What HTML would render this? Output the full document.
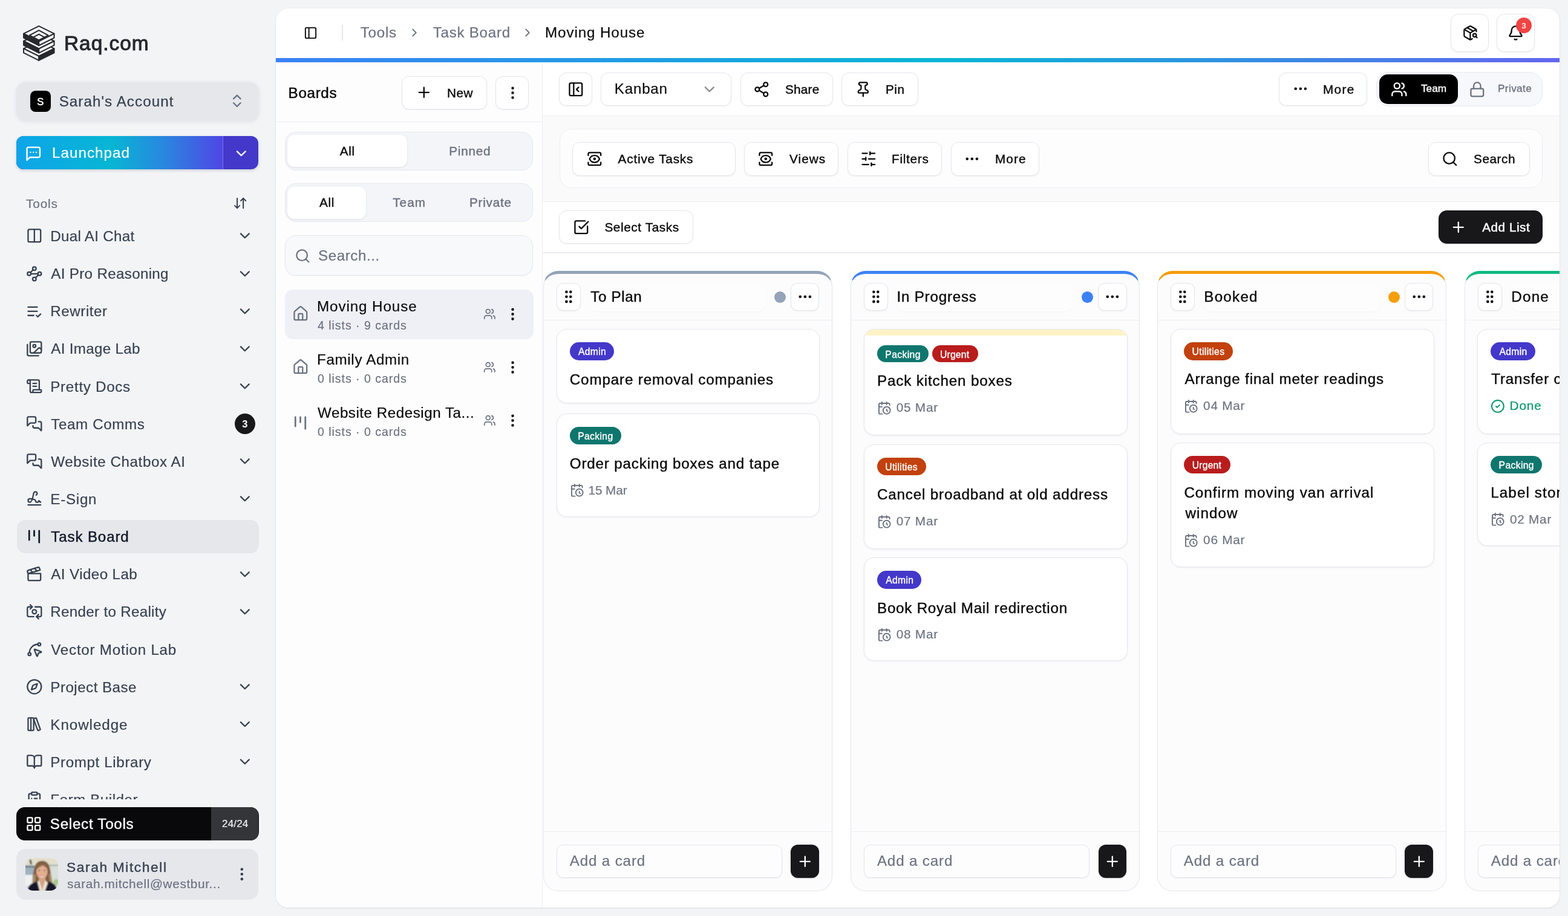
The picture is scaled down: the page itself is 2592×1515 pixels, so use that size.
<!DOCTYPE html><html lang="en"><head><meta charset="utf-8"><title>Task Board - Moving House | Raq.com</title><style>
*{box-sizing:border-box;margin:0;padding:0}
html,body{width:2592px;height:1515px;overflow:hidden;background:#f3f4f6;font-family:"Liberation Sans",sans-serif}
#app{position:absolute;left:0;top:0;width:2592px;height:1515px;will-change:transform}
.b,.t,.i{position:absolute}
.t{white-space:nowrap;line-height:1;font-kerning:normal}
.i{fill:none;stroke:currentColor;stroke-linecap:round;stroke-linejoin:round;overflow:visible}
</style></head><body><div id="app"><aside>
<svg class="i" style="left:37.6px;top:41.9px;width:52.6px;height:59.1px;stroke:none" viewBox="-1.1 -1.1 55 61.8"><g stroke="#262a2e" stroke-width="2.1" stroke-linejoin="round"><polygon points="26.40,25.80 52.80,39.00 26.40,52.20 0.00,39.00" fill="#f3f4f6"/><polygon points="0.00,39.00 26.40,52.20 26.40,59.45 0.00,46.25" fill="#f3f4f6"/><polygon points="26.40,52.20 52.80,39.00 52.80,46.25 26.40,59.45" fill="#262a2e"/><polygon points="26.40,12.90 52.80,26.10 26.40,39.30 0.00,26.10" fill="#f3f4f6"/><polygon points="0.00,26.10 26.40,39.30 26.40,46.55 0.00,33.35" fill="#262a2e"/><polygon points="26.40,39.30 52.80,26.10 52.80,33.35 26.40,46.55" fill="#f3f4f6"/><polygon points="26.40,0.00 52.80,13.20 26.40,26.40 0.00,13.20" fill="#f3f4f6"/><polygon points="0.00,13.20 26.40,26.40 26.40,33.65 0.00,20.45" fill="#262a2e"/><polygon points="26.40,26.40 52.80,13.20 52.80,20.45 26.40,33.65" fill="#f3f4f6"/><polygon points="26.4,7.5 42.5,16.0 26.4,24.5 10.299999999999997,16.0" fill="none"/><polygon points="26.4,14.299999999999999 35.9,19.4 26.4,24.5 16.9,19.4" fill="#f3f4f6"/></g></svg>
<span class="t" style="left:106px;top:54.67px;font-size:33.4px;color:#25282d;letter-spacing:0.984px;-webkit-text-stroke:1.0px #25282d;">Raq.com</span>
<div class="b" style="left:27px;top:136px;width:401px;height:64px;background:#e5e7eb;border-radius:16px;box-shadow:0 1px 5px 1px rgba(226,228,233,.95);"></div>
<div class="b" style="left:49.5px;top:150px;width:34.5px;height:34.5px;background:#000;border-radius:8.6px;"></div>
<span class="t" style="left:61.2px;top:159.68px;font-size:16.5px;color:#fff;-webkit-text-stroke:0.5px #fff;">S</span>
<span class="t" style="left:97.7px;top:156.17px;font-size:24.19px;color:#374151;letter-spacing:1.046px;-webkit-text-stroke:0.25px #374151;">Sarah's Account</span>
<svg class="i" style="left:377.68px;top:153.18px;width:27.65px;height:27.65px;color:#6b7280;" viewBox="0 0 24 24" stroke-width="2"><path d="m7 15 5 5 5-5"/><path d="m7 9 5-5 5 5"/></svg>
<div class="b" style="left:27px;top:225px;width:400px;height:55px;background:#4338ca;border-radius:12px;box-shadow:0 2px 5px rgba(30,41,59,.18);overflow:hidden;">
<div class="b" style="left:0px;top:0px;width:340.5px;height:55px;background:linear-gradient(90deg,#0ea5e9 0%,#06b6d4 46%,#2a86e0 72%,#4f46e5 100%);"></div>
<div class="b" style="left:340.5px;top:0px;width:1.5px;height:55px;background:#7c74ea;"></div>
</div>
<svg class="i" style="left:41.25px;top:239.75px;width:28.5px;height:28.5px;color:#fff;" viewBox="0 0 24 24" stroke-width="2"><path d="M21 15a2 2 0 0 1-2 2H7l-4 4V5a2 2 0 0 1 2-2h14a2 2 0 0 1 2 2z"/><path d="M8 10h.01"/><path d="M12 10h.01"/><path d="M16 10h.01"/></svg>
<span class="t" style="left:86px;top:240.67px;font-size:24.19px;color:#fff;letter-spacing:1.030px;-webkit-text-stroke:0.15px #fff;">Launchpad</span>
<svg class="i" style="left:385.18px;top:239.68px;width:27.65px;height:27.65px;color:#fff;" viewBox="0 0 24 24" stroke-width="2"><path d="m6 9 6 6 6-6"/></svg>
<span class="t" style="left:43px;top:327.09px;font-size:20.74px;color:#6b7280;letter-spacing:0.866px;-webkit-text-stroke:0.2px #6b7280;">Tools</span>
<svg class="i" style="left:384.9px;top:324.4px;width:24.2px;height:24.2px;color:#374151;" viewBox="0 0 24 24" stroke-width="2"><path d="m3 16 4 4 4-4"/><path d="M7 20V4"/><path d="m21 8-4-4-4 4"/><path d="M17 4v16"/></svg>
<nav class="b" style="left:0px;top:350px;width:456px;height:972.3px;overflow:hidden;">
<svg class="i" style="left:42.88px;top:26.48px;width:27.65px;height:27.65px;color:#374151;" viewBox="0 0 24 24" stroke-width="2"><rect width="18" height="18" x="3" y="3" rx="2"/><path d="M12 3v18"/></svg>
<span class="t" style="left:83.3px;top:29.07px;font-size:24.19px;color:#374151;letter-spacing:0.281px;-webkit-text-stroke:0.18px #374151;">Dual AI Chat</span>
<svg class="i" style="left:390.68px;top:26.48px;width:27.65px;height:27.65px;color:#374151;" viewBox="0 0 24 24" stroke-width="2"><path d="m6 9 6 6 6-6"/></svg>
<svg class="i" style="left:42.88px;top:88.61px;width:27.65px;height:27.65px;color:#374151;" viewBox="0 0 24 24" stroke-width="2"><circle cx="12" cy="4.5" r="2.5"/><path d="m10.2 6.3-3.9 3.9"/><circle cx="4.5" cy="12" r="2.5"/><path d="M7 12h10"/><circle cx="19.5" cy="12" r="2.5"/><path d="m13.8 17.7 3.9-3.9"/><circle cx="12" cy="19.5" r="2.5"/></svg>
<span class="t" style="left:84.3px;top:91.21px;font-size:24.19px;color:#374151;letter-spacing:0.312px;-webkit-text-stroke:0.18px #374151;">AI Pro Reasoning</span>
<svg class="i" style="left:390.68px;top:88.61px;width:27.65px;height:27.65px;color:#374151;" viewBox="0 0 24 24" stroke-width="2"><path d="m6 9 6 6 6-6"/></svg>
<svg class="i" style="left:42.88px;top:150.74px;width:27.65px;height:27.65px;color:#374151;" viewBox="0 0 24 24" stroke-width="2"><path d="M11 18H3"/><path d="m15 18 2 2 4-4"/><path d="M16 12H3"/><path d="M16 6H3"/></svg>
<span class="t" style="left:83.3px;top:153.35px;font-size:24.19px;color:#374151;letter-spacing:0.545px;-webkit-text-stroke:0.18px #374151;">Rewriter</span>
<svg class="i" style="left:390.68px;top:150.74px;width:27.65px;height:27.65px;color:#374151;" viewBox="0 0 24 24" stroke-width="2"><path d="m6 9 6 6 6-6"/></svg>
<svg class="i" style="left:42.88px;top:212.87px;width:27.65px;height:27.65px;color:#374151;" viewBox="0 0 24 24" stroke-width="2"><path d="M18 22H4a2 2 0 0 1-2-2V6"/><path d="m22 13-1.296-1.296a2.41 2.41 0 0 0-3.408 0L11 18"/><circle cx="12" cy="8" r="2"/><rect width="16" height="16" x="6" y="2" rx="2"/></svg>
<span class="t" style="left:84.3px;top:215.49px;font-size:24.19px;color:#374151;letter-spacing:0.307px;-webkit-text-stroke:0.18px #374151;">AI Image Lab</span>
<svg class="i" style="left:390.68px;top:212.87px;width:27.65px;height:27.65px;color:#374151;" viewBox="0 0 24 24" stroke-width="2"><path d="m6 9 6 6 6-6"/></svg>
<svg class="i" style="left:42.88px;top:275px;width:27.65px;height:27.65px;color:#374151;" viewBox="0 0 24 24" stroke-width="2"><path d="M15 12h-5"/><path d="M15 8h-5"/><path d="M19 17V5a2 2 0 0 0-2-2H4"/><path d="M8 21h12a2 2 0 0 0 2-2v-1a1 1 0 0 0-1-1H11a1 1 0 0 0-1 1v1a2 2 0 1 1-4 0V5a2 2 0 1 0-4 0v2a1 1 0 0 0 1 1h3"/></svg>
<span class="t" style="left:83.3px;top:277.63px;font-size:24.19px;color:#374151;letter-spacing:0.689px;-webkit-text-stroke:0.18px #374151;">Pretty Docs</span>
<svg class="i" style="left:390.68px;top:275px;width:27.65px;height:27.65px;color:#374151;" viewBox="0 0 24 24" stroke-width="2"><path d="m6 9 6 6 6-6"/></svg>
<svg class="i" style="left:42.88px;top:337.13px;width:27.65px;height:27.65px;color:#374151;" viewBox="0 0 24 24" stroke-width="2"><path d="M14 9a2 2 0 0 1-2 2H6l-4 4V4a2 2 0 0 1 2-2h8a2 2 0 0 1 2 2z"/><path d="M18 9h2a2 2 0 0 1 2 2v11l-4-4h-6a2 2 0 0 1-2-2v-1"/></svg>
<span class="t" style="left:84.3px;top:339.77px;font-size:24.19px;color:#374151;letter-spacing:0.602px;-webkit-text-stroke:0.18px #374151;">Team Comms</span>
<div class="b" style="left:387.7px;top:334.2px;width:34px;height:34px;background:#18181b;border-radius:50%;"></div>
<span class="t" style="left:400.2px;top:343.48px;font-size:16.5px;color:#fff;font-weight:700;">3</span>
<svg class="i" style="left:42.88px;top:399.26px;width:27.65px;height:27.65px;color:#374151;" viewBox="0 0 24 24" stroke-width="2"><path d="M14 9a2 2 0 0 1-2 2H6l-4 4V4a2 2 0 0 1 2-2h8a2 2 0 0 1 2 2z"/><path d="M18 9h2a2 2 0 0 1 2 2v11l-4-4h-6a2 2 0 0 1-2-2v-1"/></svg>
<span class="t" style="left:84.3px;top:401.91px;font-size:24.19px;color:#374151;letter-spacing:0.571px;-webkit-text-stroke:0.18px #374151;">Website Chatbox AI</span>
<svg class="i" style="left:390.68px;top:399.26px;width:27.65px;height:27.65px;color:#374151;" viewBox="0 0 24 24" stroke-width="2"><path d="m6 9 6 6 6-6"/></svg>
<svg class="i" style="left:42.88px;top:461.39px;width:27.65px;height:27.65px;color:#374151;" viewBox="0 0 24 24" stroke-width="2"><path d="m21 17-2.156-1.868A.5.5 0 0 0 18 15.5v.5a1 1 0 0 1-1 1h-2a1 1 0 0 1-1-1c0-2.545-3.991-3.97-8.5-4a1 1 0 0 0 0 5c4.153 0 4.745-11.295 5.708-13.5a2.5 2.5 0 1 1 3.31 3.284"/><path d="M3 21h18"/></svg>
<span class="t" style="left:83.3px;top:464.05px;font-size:24.19px;color:#374151;letter-spacing:0.731px;-webkit-text-stroke:0.18px #374151;">E-Sign</span>
<svg class="i" style="left:390.68px;top:461.39px;width:27.65px;height:27.65px;color:#374151;" viewBox="0 0 24 24" stroke-width="2"><path d="m6 9 6 6 6-6"/></svg>
<div class="b" style="left:28px;top:510px;width:400px;height:54.5px;background:#e5e7eb;border-radius:14px;"></div>
<svg class="i" style="left:39.8px;top:521.2px;width:33px;height:33px;color:#111827;" viewBox="0 0 24 24" stroke-width="2"><path d="M6 5v11"/><path d="M12 5v6"/><path d="M18 5v14"/></svg>
<span class="t" style="left:84.3px;top:526.19px;font-size:24.19px;color:#111827;letter-spacing:0.828px;-webkit-text-stroke:0.45px #111827;">Task Board</span>
<svg class="i" style="left:42.88px;top:585.65px;width:27.65px;height:27.65px;color:#374151;" viewBox="0 0 24 24" stroke-width="2"><path d="M20.2 6 3 11l-.9-2.4c-.3-1.1.3-2.2 1.3-2.5l13.5-4c1.1-.3 2.2.3 2.5 1.3Z"/><path d="m6.2 5.3 3.1 3.9"/><path d="m12.4 3.4 3.1 4"/><path d="M3 11h18v8a2 2 0 0 1-2 2H5a2 2 0 0 1-2-2Z"/></svg>
<span class="t" style="left:84.3px;top:588.33px;font-size:24.19px;color:#374151;letter-spacing:0.398px;-webkit-text-stroke:0.18px #374151;">AI Video Lab</span>
<svg class="i" style="left:390.68px;top:585.65px;width:27.65px;height:27.65px;color:#374151;" viewBox="0 0 24 24" stroke-width="2"><path d="m6 9 6 6 6-6"/></svg>
<svg class="i" style="left:42.88px;top:647.78px;width:27.65px;height:27.65px;color:#374151;" viewBox="0 0 24 24" stroke-width="2"><path d="M11 19H4a2 2 0 0 1-2-2V7a2 2 0 0 1 2-2h5"/><path d="M13 5h7a2 2 0 0 1 2 2v10a2 2 0 0 1-2 2h-5"/><circle cx="12" cy="12" r="3"/><path d="m18 22-3-3 3-3"/><path d="m6 2 3 3-3 3"/></svg>
<span class="t" style="left:83.3px;top:650.47px;font-size:24.19px;color:#374151;letter-spacing:0.295px;-webkit-text-stroke:0.18px #374151;">Render to Reality</span>
<svg class="i" style="left:390.68px;top:647.78px;width:27.65px;height:27.65px;color:#374151;" viewBox="0 0 24 24" stroke-width="2"><path d="m6 9 6 6 6-6"/></svg>
<svg class="i" style="left:42.88px;top:709.91px;width:27.65px;height:27.65px;color:#374151;" viewBox="0 0 24 24" stroke-width="2"><path d="M12.034 12.681a.498.498 0 0 1 .647-.647l9 3.5a.5.5 0 0 1-.033.943l-3.444 1.068a1 1 0 0 0-.66.66l-1.067 3.443a.5.5 0 0 1-.943.033z"/><path d="M5 17A12 12 0 0 1 17 5"/><circle cx="19" cy="5" r="2"/><circle cx="5" cy="19" r="2"/></svg>
<span class="t" style="left:84.3px;top:712.61px;font-size:24.19px;color:#374151;letter-spacing:0.749px;-webkit-text-stroke:0.18px #374151;">Vector Motion Lab</span>
<svg class="i" style="left:42.88px;top:772.04px;width:27.65px;height:27.65px;color:#374151;" viewBox="0 0 24 24" stroke-width="2"><path d="m16.24 7.76-1.804 5.411a2 2 0 0 1-1.265 1.265L7.76 16.24l1.804-5.411a2 2 0 0 1 1.265-1.265z"/><circle cx="12" cy="12" r="10"/></svg>
<span class="t" style="left:83.3px;top:774.75px;font-size:24.19px;color:#374151;letter-spacing:0.466px;-webkit-text-stroke:0.18px #374151;">Project Base</span>
<svg class="i" style="left:390.68px;top:772.04px;width:27.65px;height:27.65px;color:#374151;" viewBox="0 0 24 24" stroke-width="2"><path d="m6 9 6 6 6-6"/></svg>
<svg class="i" style="left:42.88px;top:834.17px;width:27.65px;height:27.65px;color:#374151;" viewBox="0 0 24 24" stroke-width="2"><rect width="8" height="18" x="3" y="3" rx="1"/><path d="M7 3v18"/><path d="M20.4 18.9c.2.5-.1 1.1-.6 1.3l-1.9.7c-.5.2-1.1-.1-1.3-.6L11.1 5.1c-.2-.5.1-1.1.6-1.3l1.9-.7c.5-.2 1.1.1 1.3.6Z"/></svg>
<span class="t" style="left:83.3px;top:836.89px;font-size:24.19px;color:#374151;letter-spacing:0.946px;-webkit-text-stroke:0.18px #374151;">Knowledge</span>
<svg class="i" style="left:390.68px;top:834.17px;width:27.65px;height:27.65px;color:#374151;" viewBox="0 0 24 24" stroke-width="2"><path d="m6 9 6 6 6-6"/></svg>
<svg class="i" style="left:42.88px;top:896.3px;width:27.65px;height:27.65px;color:#374151;" viewBox="0 0 24 24" stroke-width="2"><path d="M12 7v14"/><path d="M3 18a1 1 0 0 1-1-1V4a1 1 0 0 1 1-1h5a4 4 0 0 1 4 4 4 4 0 0 1 4-4h5a1 1 0 0 1 1 1v13a1 1 0 0 1-1 1h-6a3 3 0 0 0-3 3 3 3 0 0 0-3-3z"/></svg>
<span class="t" style="left:83.3px;top:899.03px;font-size:24.19px;color:#374151;letter-spacing:0.614px;-webkit-text-stroke:0.18px #374151;">Prompt Library</span>
<svg class="i" style="left:390.68px;top:896.3px;width:27.65px;height:27.65px;color:#374151;" viewBox="0 0 24 24" stroke-width="2"><path d="m6 9 6 6 6-6"/></svg>
<svg class="i" style="left:42.88px;top:958.43px;width:27.65px;height:27.65px;color:#374151;" viewBox="0 0 24 24" stroke-width="2"><rect width="8" height="4" x="8" y="2" rx="1" ry="1"/><path d="M16 4h2a2 2 0 0 1 2 2v14a2 2 0 0 1-2 2H6a2 2 0 0 1-2-2V6a2 2 0 0 1 2-2h2"/><path d="M12 11h4"/><path d="M12 16h4"/><path d="M8 11h.01"/><path d="M8 16h.01"/></svg>
<span class="t" style="left:83.3px;top:961.17px;font-size:24.19px;color:#374151;letter-spacing:0.538px;-webkit-text-stroke:0.18px #374151;">Form Builder</span>
</nav>
<div class="b" style="left:27px;top:1335px;width:400.5px;height:55.3px;background:#09090b;border-radius:14px;overflow:hidden;">
<div class="b" style="left:321.7px;top:0px;width:78.8px;height:55.3px;background:#343539;"></div>
</div>
<svg class="i" style="left:42.18px;top:1348.78px;width:27.65px;height:27.65px;color:#fff;" viewBox="0 0 24 24" stroke-width="2"><rect width="7" height="7" x="3" y="3" rx="1"/><rect width="7" height="7" x="14" y="3" rx="1"/><rect width="7" height="7" x="14" y="14" rx="1"/><rect width="7" height="7" x="3" y="14" rx="1"/></svg>
<span class="t" style="left:82.8px;top:1351.27px;font-size:24.19px;color:#fff;letter-spacing:0.717px;-webkit-text-stroke:0.4px #fff;">Select Tools</span>
<span class="t" style="left:367px;top:1354.26px;font-size:17px;color:#f4f4f5;letter-spacing:0.178px;-webkit-text-stroke:0.18px #f4f4f5;">24/24</span>
<div class="b" style="left:27px;top:1404px;width:400.4px;height:83.8px;background:#e5e7eb;border-radius:15px;"></div>
<svg class="i" style="left:42px;top:1419px;width:54px;height:54px;stroke:none" viewBox="0 0 54 54"><defs><clipPath id="av"><rect width="54" height="54" rx="12.5"/></clipPath><filter id="bl" x="-10%" y="-10%" width="120%" height="120%"><feGaussianBlur stdDeviation="0.9"/></filter></defs><g clip-path="url(#av)"><g filter="url(#bl)"><rect x="-3" y="-3" width="60" height="60" fill="#dcdfd6"/><rect x="-3" y="-3" width="60" height="15" fill="#e3dfcb"/><rect x="-3" y="12" width="18" height="17" fill="#9fb3bf"/><rect x="-3" y="13" width="18" height="3" fill="#6f7f86"/><rect x="-3" y="28" width="17" height="18" fill="#eef0f2"/><rect x="38" y="12" width="19" height="30" fill="#d9e0da"/><rect x="38" y="11" width="19" height="2.5" fill="#aeb8b2"/><ellipse cx="51" cy="40" rx="5" ry="5" fill="#a9c98c"/><path d="M6.5 2.5l3 .5 1.5 7-3 1z" fill="#4a4a42"/><path d="M12 43c-1-9 1-20 3-27C17 8 22 4.5 28 4.8c7 .3 11 5 12.500 12 1.500 8 2.500 17 4 25z" fill="#7d5c40"/><path d="M12 43c0-6 1-12 2.500-17l3 2-1 15zM44.500 42c-1-6-1.500-12-3-17l-3 2 1.500 15z" fill="#a98a62"/><ellipse cx="27.400" cy="22.800" rx="9.300" ry="12" fill="#e3b091"/><path d="M18.200 19c1-8 6-10.500 10-10.500s8 3 9 10.500c-3-3-5.500-5.500-9-6.500-3 1.500-7 3.500-10 6.500z" fill="#8a6646"/><ellipse cx="23" cy="20.600" rx="1.700" ry=".9" fill="#5b4334"/><ellipse cx="31.600" cy="20.600" rx="1.700" ry=".9" fill="#5b4334"/><ellipse cx="22" cy="26" rx="2.600" ry="2" fill="#e9a58d" opacity=".7"/><ellipse cx="33" cy="26" rx="2.600" ry="2" fill="#e9a58d" opacity=".7"/><path d="M22.800 28.600c2.500 1.200 6.500 1.200 9.200 0-.8 3.600-8.200 3.800-9.200 0z" fill="#f6eeee"/><path d="M22.600 28.400c3 .9 6.500.9 9.600 0l-.5 1c-3 .9-5.800.9-8.600 0z" fill="#c77a72"/><path d="M22.500 33h10.500l1 11h-12.500z" fill="#d9a384"/><path d="M18.500 41l4.500-4 4.500 17h-10zM37 41l-4.500-4-4.500 17h10z" fill="#efe6d6"/><path d="M23.500 38.500h8.500l-4 15.500z" fill="#d49f80"/><path d="M3 57c0-10 5-15 16.500-18.500l4 15.500 2 3zM53.500 57c-1-10-5-15-15.500-18.500l-5.500 15.500-2 3z" fill="#121829"/></g></g></svg>
<span class="t" style="left:110px;top:1423.04px;font-size:22.81px;color:#374151;letter-spacing:1.587px;-webkit-text-stroke:0.4px #374151;">Sarah Mitchell</span>
<span class="t" style="left:111px;top:1452.09px;font-size:20.74px;color:#6b7280;letter-spacing:0.644px;-webkit-text-stroke:0.18px #6b7280;">sarah.mitchell@westbur...</span>
<svg class="i" style="left:386.48px;top:1432.38px;width:27.65px;height:27.65px;color:#374151;" viewBox="0 0 24 24" stroke-width="2"><circle cx="12" cy="12" r="1"/><circle cx="12" cy="5" r="1"/><circle cx="12" cy="19" r="1"/></svg>
</aside>
<main class="b" style="left:456px;top:13.8px;width:2122.4px;height:1487.6px;background:#fff;border-radius:20.7px;box-shadow:0 1px 3px rgba(15,23,42,.10),0 0 2px rgba(15,23,42,.05);overflow:hidden;">
<header>
<svg class="i" style="left:46.2px;top:29.5px;width:23px;height:23px;color:#0a0a0a;" viewBox="0 0 24 24" stroke-width="2"><rect width="18" height="18" x="3" y="3" rx="2"/><path d="M9 3v18"/></svg>
<div class="b" style="left:109.4px;top:27.2px;width:1.6px;height:26.5px;background:#e5e7eb;"></div>
<span class="t" style="left:139.7px;top:28.67px;font-size:24.19px;color:#6b7280;letter-spacing:0.732px;-webkit-text-stroke:0.18px #6b7280;">Tools</span>
<svg class="i" style="left:218.2px;top:29.6px;width:22px;height:22px;color:#6b7280;" viewBox="0 0 24 24" stroke-width="2"><path d="m9 18 6-6-6-6"/></svg>
<span class="t" style="left:259.7px;top:28.67px;font-size:24.19px;color:#6b7280;letter-spacing:0.717px;-webkit-text-stroke:0.18px #6b7280;">Task Board</span>
<svg class="i" style="left:405px;top:29.6px;width:22px;height:22px;color:#6b7280;" viewBox="0 0 24 24" stroke-width="2"><path d="m9 18 6-6-6-6"/></svg>
<span class="t" style="left:445px;top:28.67px;font-size:24.19px;color:#0a0a0a;letter-spacing:0.895px;-webkit-text-stroke:0.18px #0a0a0a;">Moving House</span>
<div class="b" style="left:1942.1px;top:9.4px;width:63.2px;height:62.5px;background:#fff;border-radius:12.5px;border:1px solid #e4e6ec;box-shadow:0 1px 2px rgba(16,24,40,.06);"></div>
<svg class="i" style="left:1961px;top:27.6px;width:26.8px;height:26.8px;color:#0a0a0a;" viewBox="0 0 24 24" stroke-width="2"><path d="M21 10V8a2 2 0 0 0-1-1.73l-7-4a2 2 0 0 0-2 0l-7 4A2 2 0 0 0 3 8v8a2 2 0 0 0 1 1.73l7 4a2 2 0 0 0 2 0l2-1.14"/><path d="m7.5 4.27 9 5.15"/><polyline points="3.29 7 12 12 20.71 7"/><line x1="12" x2="12" y1="22" y2="12"/><circle cx="18.5" cy="15.5" r="2.5"/><path d="M20.27 17.27 22 19"/></svg>
<div class="b" style="left:2018.1px;top:9.4px;width:62.6px;height:62.5px;background:#fff;border-radius:12.5px;border:1px solid #e4e6ec;box-shadow:0 1px 2px rgba(16,24,40,.06);"></div>
<svg class="i" style="left:2035.8px;top:27.7px;width:27px;height:27px;color:#0a0a0a;" viewBox="0 0 24 24" stroke-width="2"><path d="M10.268 21a2 2 0 0 0 3.464 0"/><path d="M3.262 15.326A1 1 0 0 0 4 17h16a1 1 0 0 0 .74-1.673C19.41 13.956 18 12.499 18 8A6 6 0 0 0 6 8c0 4.499-1.411 5.956-2.738 7.326"/></svg>
<div class="b" style="left:2049.7px;top:14.9px;width:26.3px;height:26.3px;background:#ef4444;border-radius:50%;"></div>
<span class="t" style="left:2059.3px;top:22.62px;font-size:13.5px;color:#fff;-webkit-text-stroke:0.18px #fff;">3</span>
</header>
<div class="b" style="left:0px;top:82.4px;width:2122.4px;height:8px;background:linear-gradient(90deg,#3b82f6 0%,#06b6d4 52%,#6366f1 100%);"></div>
<section>
<div class="b" style="left:0px;top:89.7px;width:439.6px;height:1397.9px;background:#fdfdfe;"></div>
<div class="b" style="left:439.6px;top:89.7px;width:1.4px;height:1397.9px;background:#ebedf2;"></div>
<span class="t" style="left:20.6px;top:127.97px;font-size:24.19px;color:#0a0a0a;letter-spacing:0.671px;-webkit-text-stroke:0.5px #0a0a0a;">Boards</span>
<div class="b" style="left:208.3px;top:112.2px;width:140.9px;height:54.7px;background:#fff;border-radius:12px;border:1px solid #e4e6ec;box-shadow:0 1px 2px rgba(16,24,40,.06);"></div>
<svg class="i" style="left:230.68px;top:125.68px;width:27.65px;height:27.65px;color:#0a0a0a;" viewBox="0 0 24 24" stroke-width="2"><path d="M5 12h14"/><path d="M12 5v14"/></svg>
<span class="t" style="left:283px;top:130.59px;font-size:20.74px;color:#0a0a0a;letter-spacing:0.497px;-webkit-text-stroke:0.4px #0a0a0a;">New</span>
<div class="b" style="left:362.8px;top:112.2px;width:55.6px;height:54.7px;background:#fff;border-radius:12px;border:1px solid #e4e6ec;box-shadow:0 1px 2px rgba(16,24,40,.06);"></div>
<svg class="i" style="left:378px;top:126.4px;width:27px;height:27px;color:#0a0a0a;" viewBox="0 0 24 24" stroke-width="2"><circle cx="12" cy="12" r="1"/><circle cx="12" cy="5" r="1"/><circle cx="12" cy="19" r="1"/></svg>
<div class="b" style="left:0px;top:186.8px;width:439.6px;height:1.4px;background:#ebedf2;"></div>
<div class="b" style="left:14.5px;top:204.4px;width:410.7px;height:63.5px;background:#f4f5f9;border-radius:18px;border:1px solid #e6e8f0;"></div>
<div class="b" style="left:19px;top:209.4px;width:197.5px;height:53px;background:#fff;border-radius:11.5px;box-shadow:0 1px 3px rgba(16,24,40,.10);"></div>
<span class="t" style="left:105.7px;top:225.79px;font-size:20.74px;color:#0a0a0a;letter-spacing:0.682px;-webkit-text-stroke:0.4px #0a0a0a;">All</span>
<span class="t" style="left:286.2px;top:225.79px;font-size:20.74px;color:#6b7280;letter-spacing:0.754px;-webkit-text-stroke:0.4px #6b7280;">Pinned</span>
<div class="b" style="left:14.5px;top:289.4px;width:410.7px;height:63.5px;background:#f4f5f9;border-radius:18px;border:1px solid #e6e8f0;"></div>
<div class="b" style="left:19px;top:294.9px;width:130px;height:53px;background:#fff;border-radius:11.5px;box-shadow:0 1px 3px rgba(16,24,40,.10);"></div>
<span class="t" style="left:72px;top:310.79px;font-size:20.74px;color:#0a0a0a;letter-spacing:0.632px;-webkit-text-stroke:0.4px #0a0a0a;">All</span>
<span class="t" style="left:193.2px;top:310.79px;font-size:20.74px;color:#6b7280;letter-spacing:1.023px;-webkit-text-stroke:0.4px #6b7280;">Team</span>
<span class="t" style="left:320px;top:310.79px;font-size:20.74px;color:#6b7280;letter-spacing:0.750px;-webkit-text-stroke:0.4px #6b7280;">Private</span>
<div class="b" style="left:14.5px;top:375.7px;width:410.7px;height:66.7px;background:#f8f9fb;border-radius:18px;border:1px solid #e6e8f0;box-shadow:0 1px 2px rgba(16,24,40,.04);"></div>
<svg class="i" style="left:30.75px;top:396.45px;width:26.5px;height:26.5px;color:#6b7280;" viewBox="0 0 24 24" stroke-width="2"><circle cx="11" cy="11" r="8"/><path d="m21 21-4.3-4.3"/></svg>
<span class="t" style="left:70px;top:397.37px;font-size:24.19px;color:#6b7280;letter-spacing:0.553px;-webkit-text-stroke:0.18px #6b7280;">Search...</span>
<div class="b" style="left:14.5px;top:464.9px;width:411.5px;height:82px;background:#eff0f6;border-radius:13px;"></div>
<svg class="i" style="left:26.78px;top:491.58px;width:27.65px;height:27.65px;color:#6b7280;" viewBox="0 0 24 24" stroke-width="2"><path d="M15 21v-8a1 1 0 0 0-1-1h-4a1 1 0 0 0-1 1v8"/><path d="M3 10a2 2 0 0 1 .709-1.528l7-5.999a2 2 0 0 1 2.582 0l7 5.999A2 2 0 0 1 21 10v9a2 2 0 0 1-2 2H5a2 2 0 0 1-2-2z"/></svg>
<span class="t" style="left:68px;top:481.37px;font-size:24.19px;color:#0a0a0a;letter-spacing:0.913px;-webkit-text-stroke:0.18px #0a0a0a;">Moving House</span>
<span class="t" style="left:69px;top:515.32px;font-size:19.53px;color:#6b7280;letter-spacing:0.971px;-webkit-text-stroke:0.18px #6b7280;">4 lists · 9 cards</span>
<svg class="i" style="left:343.25px;top:494.85px;width:20.7px;height:20.7px;color:#6b7280;" viewBox="0 0 24 24" stroke-width="2"><path d="M16 21v-2a4 4 0 0 0-4-4H6a4 4 0 0 0-4 4v2"/><circle cx="9" cy="7" r="4"/><path d="M22 21v-2a4 4 0 0 0-3-3.87"/><path d="M16 3.13a4 4 0 0 1 0 7.75"/></svg>
<svg class="i" style="left:378px;top:492px;width:27px;height:27px;color:#0a0a0a;" viewBox="0 0 24 24" stroke-width="2"><circle cx="12" cy="12" r="1"/><circle cx="12" cy="5" r="1"/><circle cx="12" cy="19" r="1"/></svg>
<svg class="i" style="left:26.78px;top:579.58px;width:27.65px;height:27.65px;color:#6b7280;" viewBox="0 0 24 24" stroke-width="2"><path d="M15 21v-8a1 1 0 0 0-1-1h-4a1 1 0 0 0-1 1v8"/><path d="M3 10a2 2 0 0 1 .709-1.528l7-5.999a2 2 0 0 1 2.582 0l7 5.999A2 2 0 0 1 21 10v9a2 2 0 0 1-2 2H5a2 2 0 0 1-2-2z"/></svg>
<span class="t" style="left:68px;top:569.37px;font-size:24.19px;color:#0a0a0a;letter-spacing:0.651px;-webkit-text-stroke:0.18px #0a0a0a;">Family Admin</span>
<span class="t" style="left:69px;top:603.32px;font-size:19.53px;color:#6b7280;letter-spacing:0.971px;-webkit-text-stroke:0.18px #6b7280;">0 lists · 0 cards</span>
<svg class="i" style="left:343.25px;top:582.85px;width:20.7px;height:20.7px;color:#6b7280;" viewBox="0 0 24 24" stroke-width="2"><path d="M16 21v-2a4 4 0 0 0-4-4H6a4 4 0 0 0-4 4v2"/><circle cx="9" cy="7" r="4"/><path d="M22 21v-2a4 4 0 0 0-3-3.87"/><path d="M16 3.13a4 4 0 0 1 0 7.75"/></svg>
<svg class="i" style="left:378px;top:580px;width:27px;height:27px;color:#0a0a0a;" viewBox="0 0 24 24" stroke-width="2"><circle cx="12" cy="12" r="1"/><circle cx="12" cy="5" r="1"/><circle cx="12" cy="19" r="1"/></svg>
<svg class="i" style="left:24.2px;top:668.8px;width:33px;height:33px;color:#6b7280;" viewBox="0 0 24 24" stroke-width="2"><path d="M6 5v11"/><path d="M12 5v6"/><path d="M18 5v14"/></svg>
<span class="t" style="left:69px;top:657.37px;font-size:24.19px;color:#0a0a0a;letter-spacing:0.521px;-webkit-text-stroke:0.18px #0a0a0a;">Website Redesign Ta...</span>
<span class="t" style="left:69px;top:691.32px;font-size:19.53px;color:#6b7280;letter-spacing:0.971px;-webkit-text-stroke:0.18px #6b7280;">0 lists · 0 cards</span>
<svg class="i" style="left:343.25px;top:670.85px;width:20.7px;height:20.7px;color:#6b7280;" viewBox="0 0 24 24" stroke-width="2"><path d="M16 21v-2a4 4 0 0 0-4-4H6a4 4 0 0 0-4 4v2"/><circle cx="9" cy="7" r="4"/><path d="M22 21v-2a4 4 0 0 0-3-3.87"/><path d="M16 3.13a4 4 0 0 1 0 7.75"/></svg>
<svg class="i" style="left:378px;top:668px;width:27px;height:27px;color:#0a0a0a;" viewBox="0 0 24 24" stroke-width="2"><circle cx="12" cy="12" r="1"/><circle cx="12" cy="5" r="1"/><circle cx="12" cy="19" r="1"/></svg>
</section>
<section>
<div class="b" style="left:441px;top:89.7px;width:1681.4px;height:87.1px;background:#fff;"></div>
<div class="b" style="left:441px;top:176.8px;width:1681.4px;height:1.4px;background:#ebedf2;"></div>
<div class="b" style="left:441px;top:178.2px;width:1681.4px;height:140.6px;background:#fafafb;"></div>
<div class="b" style="left:441px;top:318.8px;width:1681.4px;height:1.4px;background:#ebedf2;"></div>
<div class="b" style="left:441px;top:403.6px;width:1681.4px;height:1.4px;background:#ebedf2;"></div>
<div class="b" style="left:468.3px;top:106.2px;width:54.6px;height:54.9px;background:#fff;border-radius:12px;border:1px solid #e4e6ec;box-shadow:0 1px 2px rgba(16,24,40,.06);"></div>
<svg class="i" style="left:481.78px;top:119.88px;width:27.65px;height:27.65px;color:#0a0a0a;" viewBox="0 0 24 24" stroke-width="2"><rect width="18" height="18" x="3" y="3" rx="2"/><path d="M9 3v18"/><path d="m16 15-3-3 3-3"/></svg>
<div class="b" style="left:537px;top:106.2px;width:215.9px;height:54.9px;background:#fff;border-radius:12px;border:1px solid #e4e6ec;box-shadow:0 1px 2px rgba(16,24,40,.06);"></div>
<span class="t" style="left:559.8px;top:121.17px;font-size:24.19px;color:#0a0a0a;letter-spacing:0.772px;-webkit-text-stroke:0.18px #0a0a0a;">Kanban</span>
<svg class="i" style="left:703.18px;top:120.18px;width:27.65px;height:27.65px;color:#8a8a8a;" viewBox="0 0 24 24" stroke-width="2"><path d="m6 9 6 6 6-6"/></svg>
<div class="b" style="left:767.8px;top:106.2px;width:153.1px;height:54.9px;background:#fff;border-radius:12px;border:1px solid #e4e6ec;box-shadow:0 1px 2px rgba(16,24,40,.06);"></div>
<svg class="i" style="left:788.88px;top:119.88px;width:27.65px;height:27.65px;color:#0a0a0a;" viewBox="0 0 24 24" stroke-width="2"><circle cx="18" cy="5" r="3"/><circle cx="6" cy="12" r="3"/><circle cx="18" cy="19" r="3"/><line x1="8.59" x2="15.42" y1="13.51" y2="17.49"/><line x1="15.41" x2="8.59" y1="6.51" y2="10.49"/></svg>
<span class="t" style="left:842px;top:124.09px;font-size:20.74px;color:#0a0a0a;letter-spacing:0.226px;-webkit-text-stroke:0.4px #0a0a0a;">Share</span>
<div class="b" style="left:934.5px;top:106.2px;width:127.7px;height:54.9px;background:#fff;border-radius:12px;border:1px solid #e4e6ec;box-shadow:0 1px 2px rgba(16,24,40,.06);"></div>
<svg class="i" style="left:956.88px;top:119.88px;width:27.65px;height:27.65px;color:#0a0a0a;" viewBox="0 0 24 24" stroke-width="2"><path d="M12 17v5"/><path d="M9 10.76a2 2 0 0 1-1.11 1.79l-1.78.9A2 2 0 0 0 5 15.24V16a1 1 0 0 0 1 1h12a1 1 0 0 0 1-1v-.76a2 2 0 0 0-1.11-1.79l-1.78-.9A2 2 0 0 1 15 10.76V7a1 1 0 0 1 1-1 2 2 0 0 0 0-4H8a2 2 0 0 0 0 4 1 1 0 0 1 1 1z"/></svg>
<span class="t" style="left:1008px;top:124.09px;font-size:20.74px;color:#0a0a0a;letter-spacing:0.532px;-webkit-text-stroke:0.4px #0a0a0a;">Pin</span>
<div class="b" style="left:1657.8px;top:106.2px;width:146.4px;height:54.9px;background:#fff;border-radius:12px;border:1px solid #e4e6ec;box-shadow:0 1px 2px rgba(16,24,40,.06);"></div>
<svg class="i" style="left:1680.18px;top:119.68px;width:27.65px;height:27.65px;color:#0a0a0a;" viewBox="0 0 24 24" stroke-width="2"><circle cx="12" cy="12" r="1"/><circle cx="19" cy="12" r="1"/><circle cx="5" cy="12" r="1"/></svg>
<span class="t" style="left:1731px;top:124.09px;font-size:20.74px;color:#0a0a0a;letter-spacing:1.331px;-webkit-text-stroke:0.4px #0a0a0a;">More</span>
<div class="b" style="left:1819px;top:105.4px;width:274.5px;height:57px;background:#f7f8fb;border-radius:21px;border:1px solid #e6e8f0;"></div>
<div class="b" style="left:1824px;top:109.2px;width:130.2px;height:49px;background:#000;border-radius:14px;"></div>
<svg class="i" style="left:1843.38px;top:120.08px;width:27.65px;height:27.65px;color:#fff;" viewBox="0 0 24 24" stroke-width="2"><path d="M16 21v-2a4 4 0 0 0-4-4H6a4 4 0 0 0-4 4v2"/><circle cx="9" cy="7" r="4"/><path d="M22 21v-2a4 4 0 0 0-3-3.87"/><path d="M16 3.13a4 4 0 0 1 0 7.75"/></svg>
<span class="t" style="left:1893px;top:124.62px;font-size:17.28px;color:#fff;letter-spacing:-0.045px;-webkit-text-stroke:0.4px #fff;">Team</span>
<svg class="i" style="left:1972.38px;top:119.88px;width:27.65px;height:27.65px;color:#6b7280;" viewBox="0 0 24 24" stroke-width="2"><rect width="18" height="11" x="3" y="11" rx="2" ry="2"/><path d="M7 11V7a5 5 0 0 1 10 0v4"/></svg>
<span class="t" style="left:2020px;top:124.62px;font-size:17.28px;color:#6b7280;letter-spacing:0.344px;-webkit-text-stroke:0.35px #6b7280;">Private</span>
<div class="b" style="left:469px;top:199.4px;width:1624.5px;height:98px;background:#fdfdfe;border-radius:20px;border:1px solid #eceef3;"></div>
<div class="b" style="left:490.3px;top:221.7px;width:269.6px;height:55.2px;background:#fff;border-radius:12px;border:1px solid #e4e6ec;box-shadow:0 1px 2px rgba(16,24,40,.06);"></div>
<svg class="i" style="left:512.68px;top:235.38px;width:27.65px;height:27.65px;color:#0a0a0a;" viewBox="0 0 24 24" stroke-width="2"><path d="M21 17v2a2 2 0 0 1-2 2H5a2 2 0 0 1-2-2v-2"/><path d="M21 7V5a2 2 0 0 0-2-2H5a2 2 0 0 0-2 2v2"/><circle cx="12" cy="12" r="1"/><path d="M18.944 12.33a1 1 0 0 0 0-.66 7.5 7.5 0 0 0-13.888 0 1 1 0 0 0 0 .66 7.5 7.5 0 0 0 13.888 0"/></svg>
<span class="t" style="left:565.6px;top:239.09px;font-size:20.74px;color:#0a0a0a;letter-spacing:0.813px;-webkit-text-stroke:0.4px #0a0a0a;">Active Tasks</span>
<div class="b" style="left:773.8px;top:221.7px;width:155.9px;height:55.2px;background:#fff;border-radius:12px;border:1px solid #e4e6ec;box-shadow:0 1px 2px rgba(16,24,40,.06);"></div>
<svg class="i" style="left:796.38px;top:235.38px;width:27.65px;height:27.65px;color:#0a0a0a;" viewBox="0 0 24 24" stroke-width="2"><path d="M21 17v2a2 2 0 0 1-2 2H5a2 2 0 0 1-2-2v-2"/><path d="M21 7V5a2 2 0 0 0-2-2H5a2 2 0 0 0-2 2v2"/><circle cx="12" cy="12" r="1"/><path d="M18.944 12.33a1 1 0 0 0 0-.66 7.5 7.5 0 0 0-13.888 0 1 1 0 0 0 0 .66 7.5 7.5 0 0 0 13.888 0"/></svg>
<span class="t" style="left:849px;top:239.09px;font-size:20.74px;color:#0a0a0a;letter-spacing:1.033px;-webkit-text-stroke:0.4px #0a0a0a;">Views</span>
<div class="b" style="left:944.5px;top:221.7px;width:156.4px;height:55.2px;background:#fff;border-radius:12px;border:1px solid #e4e6ec;box-shadow:0 1px 2px rgba(16,24,40,.06);"></div>
<svg class="i" style="left:966.18px;top:235.38px;width:27.65px;height:27.65px;color:#0a0a0a;" viewBox="0 0 24 24" stroke-width="2"><line x1="21" x2="14" y1="4" y2="4"/><line x1="10" x2="3" y1="4" y2="4"/><line x1="21" x2="12" y1="12" y2="12"/><line x1="8" x2="3" y1="12" y2="12"/><line x1="21" x2="16" y1="20" y2="20"/><line x1="12" x2="3" y1="20" y2="20"/><line x1="14" x2="14" y1="2" y2="6"/><line x1="8" x2="8" y1="10" y2="14"/><line x1="16" x2="16" y1="18" y2="22"/></svg>
<span class="t" style="left:1018px;top:239.09px;font-size:20.74px;color:#0a0a0a;letter-spacing:0.737px;-webkit-text-stroke:0.4px #0a0a0a;">Filters</span>
<div class="b" style="left:1115.8px;top:221.7px;width:146.7px;height:55.2px;background:#fff;border-radius:12px;border:1px solid #e4e6ec;box-shadow:0 1px 2px rgba(16,24,40,.06);"></div>
<svg class="i" style="left:1136.88px;top:235.38px;width:27.65px;height:27.65px;color:#0a0a0a;" viewBox="0 0 24 24" stroke-width="2"><circle cx="12" cy="12" r="1"/><circle cx="19" cy="12" r="1"/><circle cx="5" cy="12" r="1"/></svg>
<span class="t" style="left:1189px;top:239.09px;font-size:20.74px;color:#0a0a0a;letter-spacing:1.097px;-webkit-text-stroke:0.4px #0a0a0a;">More</span>
<div class="b" style="left:1904.8px;top:221.7px;width:168.1px;height:55.2px;background:#fff;border-radius:12px;border:1px solid #e4e6ec;box-shadow:0 1px 2px rgba(16,24,40,.06);"></div>
<svg class="i" style="left:1927.38px;top:235.38px;width:27.65px;height:27.65px;color:#0a0a0a;" viewBox="0 0 24 24" stroke-width="2"><circle cx="11" cy="11" r="8"/><path d="m21 21-4.3-4.3"/></svg>
<span class="t" style="left:1980px;top:239.09px;font-size:20.74px;color:#0a0a0a;letter-spacing:0.567px;-webkit-text-stroke:0.4px #0a0a0a;">Search</span>
<div class="b" style="left:468.3px;top:334.2px;width:221.4px;height:54.7px;background:#fff;border-radius:12px;border:1px solid #e4e6ec;box-shadow:0 1px 2px rgba(16,24,40,.06);"></div>
<svg class="i" style="left:490.98px;top:348.38px;width:27.65px;height:27.65px;color:#0a0a0a;" viewBox="0 0 24 24" stroke-width="2"><path d="M21 10.5V19a2 2 0 0 1-2 2H5a2 2 0 0 1-2-2V5a2 2 0 0 1 2-2h12.5"/><path d="m9 11 3 3L22 4"/></svg>
<span class="t" style="left:543.4px;top:352.29px;font-size:20.74px;color:#0a0a0a;letter-spacing:0.616px;-webkit-text-stroke:0.4px #0a0a0a;">Select Tasks</span>
<div class="b" style="left:1921.5px;top:334.2px;width:172.1px;height:55.4px;background:#18181b;border-radius:14px;box-shadow:0 1px 2px rgba(0,0,0,.15);"></div>
<svg class="i" style="left:1940.78px;top:348.08px;width:27.65px;height:27.65px;color:#fff;" viewBox="0 0 24 24" stroke-width="2"><path d="M5 12h14"/><path d="M12 5v14"/></svg>
<span class="t" style="left:1994.2px;top:352.29px;font-size:20.74px;color:#fff;letter-spacing:0.520px;-webkit-text-stroke:0.4px #fff;">Add List</span>
</section>
<section class="b" style="left:442px;top:434.2px;width:478px;height:1025.6px;background:#fcfcfd;border-radius:25px;border:1px solid #e4e6ee;border-top:5.2px solid #94a3b8;">
</section>
<div class="b" style="left:463.8px;top:454.2px;width:40px;height:45.7px;background:#fff;border-radius:11px;border:1px solid #e4e6ec;box-shadow:0 1px 2px rgba(16,24,40,.06);"></div>
<div class="b" style="left:519px;top:456.2px;width:291px;height:45px;background:#fdfdfe;border-radius:12px;box-shadow:0 1px 2px rgba(16,24,40,.035);"></div>
<svg class="i" style="left:469.98px;top:463.18px;width:27.65px;height:27.65px;color:#0a0a0a;" viewBox="0 0 24 24" stroke-width="2"><circle cx="9" cy="12" r="1"/><circle cx="9" cy="5" r="1"/><circle cx="9" cy="19" r="1"/><circle cx="15" cy="12" r="1"/><circle cx="15" cy="5" r="1"/><circle cx="15" cy="19" r="1"/></svg>
<span class="t" style="left:520.3px;top:465.67px;font-size:24.19px;color:#0a0a0a;letter-spacing:0.629px;-webkit-text-stroke:0.4px #0a0a0a;">To Plan</span>
<div class="b" style="left:823.8px;top:467.9px;width:19px;height:19px;background:#94a3b8;border-radius:50%;box-shadow:0 0 0 1.5px rgba(255,255,255,.7);"></div>
<div class="b" style="left:850.8px;top:454.2px;width:47.5px;height:45.7px;background:#fff;border-radius:11px;border:1px solid #e4e6ec;box-shadow:0 1px 2px rgba(16,24,40,.06);"></div>
<svg class="i" style="left:860.68px;top:463.18px;width:27.65px;height:27.65px;color:#0a0a0a;" viewBox="0 0 24 24" stroke-width="2"><circle cx="12" cy="12" r="1"/><circle cx="19" cy="12" r="1"/><circle cx="5" cy="12" r="1"/></svg>
<div class="b" style="left:443px;top:515px;width:476px;height:1.4px;background:#ebedf2;"></div>
<div class="b" style="left:443px;top:1361px;width:476px;height:1.4px;background:#ebedf2;"></div>
<div class="b" style="left:464px;top:1383.7px;width:373px;height:54.1px;background:#fdfdfe;border-radius:11px;border:1px solid #e4e6ec;box-shadow:0 1px 2px rgba(16,24,40,.06);"></div>
<span class="t" style="left:485.7px;top:1398.67px;font-size:24.19px;color:#6b7280;letter-spacing:0.841px;-webkit-text-stroke:0.18px #6b7280;">Add a card</span>
<div class="b" style="left:851.3px;top:1383.2px;width:46.7px;height:55.5px;background:#18181b;border-radius:12px;box-shadow:0 1px 2px rgba(0,0,0,.2);"></div>
<svg class="i" style="left:860.78px;top:1397.08px;width:27.65px;height:27.65px;color:#fff;" viewBox="0 0 24 24" stroke-width="2"><path d="M5 12h14"/><path d="M12 5v14"/></svg>
<section class="b" style="left:950.2px;top:434.2px;width:478px;height:1025.6px;background:#fcfcfd;border-radius:25px;border:1px solid #e4e6ee;border-top:5.2px solid #3b82f6;">
</section>
<div class="b" style="left:972px;top:454.2px;width:40px;height:45.7px;background:#fff;border-radius:11px;border:1px solid #e4e6ec;box-shadow:0 1px 2px rgba(16,24,40,.06);"></div>
<div class="b" style="left:1027.2px;top:456.2px;width:291px;height:45px;background:#fdfdfe;border-radius:12px;box-shadow:0 1px 2px rgba(16,24,40,.035);"></div>
<svg class="i" style="left:978.18px;top:463.18px;width:27.65px;height:27.65px;color:#0a0a0a;" viewBox="0 0 24 24" stroke-width="2"><circle cx="9" cy="12" r="1"/><circle cx="9" cy="5" r="1"/><circle cx="9" cy="19" r="1"/><circle cx="15" cy="12" r="1"/><circle cx="15" cy="5" r="1"/><circle cx="15" cy="19" r="1"/></svg>
<span class="t" style="left:1026.5px;top:465.67px;font-size:24.19px;color:#0a0a0a;letter-spacing:0.772px;-webkit-text-stroke:0.4px #0a0a0a;">In Progress</span>
<div class="b" style="left:1332px;top:467.9px;width:19px;height:19px;background:#3b82f6;border-radius:50%;box-shadow:0 0 0 1.5px rgba(255,255,255,.7);"></div>
<div class="b" style="left:1359px;top:454.2px;width:47.5px;height:45.7px;background:#fff;border-radius:11px;border:1px solid #e4e6ec;box-shadow:0 1px 2px rgba(16,24,40,.06);"></div>
<svg class="i" style="left:1368.88px;top:463.18px;width:27.65px;height:27.65px;color:#0a0a0a;" viewBox="0 0 24 24" stroke-width="2"><circle cx="12" cy="12" r="1"/><circle cx="19" cy="12" r="1"/><circle cx="5" cy="12" r="1"/></svg>
<div class="b" style="left:951.2px;top:515px;width:476px;height:1.4px;background:#ebedf2;"></div>
<div class="b" style="left:951.2px;top:1361px;width:476px;height:1.4px;background:#ebedf2;"></div>
<div class="b" style="left:972.2px;top:1383.7px;width:373px;height:54.1px;background:#fdfdfe;border-radius:11px;border:1px solid #e4e6ec;box-shadow:0 1px 2px rgba(16,24,40,.06);"></div>
<span class="t" style="left:993.9px;top:1398.67px;font-size:24.19px;color:#6b7280;letter-spacing:0.841px;-webkit-text-stroke:0.18px #6b7280;">Add a card</span>
<div class="b" style="left:1359.5px;top:1383.2px;width:46.7px;height:55.5px;background:#18181b;border-radius:12px;box-shadow:0 1px 2px rgba(0,0,0,.2);"></div>
<svg class="i" style="left:1368.98px;top:1397.08px;width:27.65px;height:27.65px;color:#fff;" viewBox="0 0 24 24" stroke-width="2"><path d="M5 12h14"/><path d="M12 5v14"/></svg>
<section class="b" style="left:1457px;top:434.2px;width:478px;height:1025.6px;background:#fcfcfd;border-radius:25px;border:1px solid #e4e6ee;border-top:5.2px solid #f59e0b;">
</section>
<div class="b" style="left:1478.8px;top:454.2px;width:40px;height:45.7px;background:#fff;border-radius:11px;border:1px solid #e4e6ec;box-shadow:0 1px 2px rgba(16,24,40,.06);"></div>
<div class="b" style="left:1534px;top:456.2px;width:291px;height:45px;background:#fdfdfe;border-radius:12px;box-shadow:0 1px 2px rgba(16,24,40,.035);"></div>
<svg class="i" style="left:1484.98px;top:463.18px;width:27.65px;height:27.65px;color:#0a0a0a;" viewBox="0 0 24 24" stroke-width="2"><circle cx="9" cy="12" r="1"/><circle cx="9" cy="5" r="1"/><circle cx="9" cy="19" r="1"/><circle cx="15" cy="12" r="1"/><circle cx="15" cy="5" r="1"/><circle cx="15" cy="19" r="1"/></svg>
<span class="t" style="left:1534.3px;top:465.67px;font-size:24.19px;color:#0a0a0a;letter-spacing:1.244px;-webkit-text-stroke:0.4px #0a0a0a;">Booked</span>
<div class="b" style="left:1838.8px;top:467.9px;width:19px;height:19px;background:#f59e0b;border-radius:50%;box-shadow:0 0 0 1.5px rgba(255,255,255,.7);"></div>
<div class="b" style="left:1865.8px;top:454.2px;width:47.5px;height:45.7px;background:#fff;border-radius:11px;border:1px solid #e4e6ec;box-shadow:0 1px 2px rgba(16,24,40,.06);"></div>
<svg class="i" style="left:1875.68px;top:463.18px;width:27.65px;height:27.65px;color:#0a0a0a;" viewBox="0 0 24 24" stroke-width="2"><circle cx="12" cy="12" r="1"/><circle cx="19" cy="12" r="1"/><circle cx="5" cy="12" r="1"/></svg>
<div class="b" style="left:1458px;top:515px;width:476px;height:1.4px;background:#ebedf2;"></div>
<div class="b" style="left:1458px;top:1361px;width:476px;height:1.4px;background:#ebedf2;"></div>
<div class="b" style="left:1479px;top:1383.7px;width:373px;height:54.1px;background:#fdfdfe;border-radius:11px;border:1px solid #e4e6ec;box-shadow:0 1px 2px rgba(16,24,40,.06);"></div>
<span class="t" style="left:1500.7px;top:1398.67px;font-size:24.19px;color:#6b7280;letter-spacing:0.841px;-webkit-text-stroke:0.18px #6b7280;">Add a card</span>
<div class="b" style="left:1866.3px;top:1383.2px;width:46.7px;height:55.5px;background:#18181b;border-radius:12px;box-shadow:0 1px 2px rgba(0,0,0,.2);"></div>
<svg class="i" style="left:1875.78px;top:1397.08px;width:27.65px;height:27.65px;color:#fff;" viewBox="0 0 24 24" stroke-width="2"><path d="M5 12h14"/><path d="M12 5v14"/></svg>
<section class="b" style="left:1965px;top:434.2px;width:478px;height:1025.6px;background:#fcfcfd;border-radius:25px;border:1px solid #e4e6ee;border-top:5.2px solid #10b981;">
</section>
<div class="b" style="left:1986.8px;top:454.2px;width:40px;height:45.7px;background:#fff;border-radius:11px;border:1px solid #e4e6ec;box-shadow:0 1px 2px rgba(16,24,40,.06);"></div>
<div class="b" style="left:2042px;top:456.2px;width:291px;height:45px;background:#fdfdfe;border-radius:12px;box-shadow:0 1px 2px rgba(16,24,40,.035);"></div>
<svg class="i" style="left:1992.98px;top:463.18px;width:27.65px;height:27.65px;color:#0a0a0a;" viewBox="0 0 24 24" stroke-width="2"><circle cx="9" cy="12" r="1"/><circle cx="9" cy="5" r="1"/><circle cx="9" cy="19" r="1"/><circle cx="15" cy="12" r="1"/><circle cx="15" cy="5" r="1"/><circle cx="15" cy="19" r="1"/></svg>
<span class="t" style="left:2042.3px;top:465.67px;font-size:24.19px;color:#0a0a0a;letter-spacing:1.210px;-webkit-text-stroke:0.4px #0a0a0a;">Done</span>
<div class="b" style="left:2346.8px;top:467.9px;width:19px;height:19px;background:#10b981;border-radius:50%;box-shadow:0 0 0 1.5px rgba(255,255,255,.7);"></div>
<div class="b" style="left:2373.8px;top:454.2px;width:47.5px;height:45.7px;background:#fff;border-radius:11px;border:1px solid #e4e6ec;box-shadow:0 1px 2px rgba(16,24,40,.06);"></div>
<svg class="i" style="left:2383.68px;top:463.18px;width:27.65px;height:27.65px;color:#0a0a0a;" viewBox="0 0 24 24" stroke-width="2"><circle cx="12" cy="12" r="1"/><circle cx="19" cy="12" r="1"/><circle cx="5" cy="12" r="1"/></svg>
<div class="b" style="left:1966px;top:515px;width:476px;height:1.4px;background:#ebedf2;"></div>
<div class="b" style="left:1966px;top:1361px;width:476px;height:1.4px;background:#ebedf2;"></div>
<div class="b" style="left:1987px;top:1383.7px;width:373px;height:54.1px;background:#fdfdfe;border-radius:11px;border:1px solid #e4e6ec;box-shadow:0 1px 2px rgba(16,24,40,.06);"></div>
<span class="t" style="left:2008.7px;top:1398.67px;font-size:24.19px;color:#6b7280;letter-spacing:0.841px;-webkit-text-stroke:0.18px #6b7280;">Add a card</span>
<div class="b" style="left:2374.3px;top:1383.2px;width:46.7px;height:55.5px;background:#18181b;border-radius:12px;box-shadow:0 1px 2px rgba(0,0,0,.2);"></div>
<svg class="i" style="left:2383.78px;top:1397.08px;width:27.65px;height:27.65px;color:#fff;" viewBox="0 0 24 24" stroke-width="2"><path d="M5 12h14"/><path d="M12 5v14"/></svg>
<article class="b" style="left:463.6px;top:530.7px;width:435.8px;height:122.7px;background:#fff;border-radius:17px;border:1px solid #e6e8ef;box-shadow:0 1px 3px rgba(16,24,40,.07);overflow:hidden;">
<div class="b" style="left:21.2px;top:21px;width:73.5px;height:29.5px;background:#4338ca;border-radius:15px;"></div>
<span class="t" style="left:35.45px;top:28.96px;font-size:15.7px;color:#fff;letter-spacing:0.315px;-webkit-text-stroke:0.35px #fff;">Admin</span>
<span class="t" style="left:21.2px;top:70.07px;font-size:24.19px;color:#0a0a0a;letter-spacing:0.849px;-webkit-text-stroke:0.4px #0a0a0a;">Compare removal companies</span>
</article>
<article class="b" style="left:463.6px;top:669.9px;width:435.8px;height:171px;background:#fff;border-radius:17px;border:1px solid #e6e8ef;box-shadow:0 1px 3px rgba(16,24,40,.07);overflow:hidden;">
<div class="b" style="left:21.2px;top:21px;width:85px;height:29.5px;background:#0f766e;border-radius:15px;"></div>
<span class="t" style="left:34.55px;top:28.96px;font-size:15.7px;color:#fff;letter-spacing:0.369px;-webkit-text-stroke:0.35px #fff;">Packing</span>
<span class="t" style="left:21.2px;top:70.07px;font-size:24.19px;color:#0a0a0a;letter-spacing:0.830px;-webkit-text-stroke:0.4px #0a0a0a;">Order packing boxes and tape</span>
<svg class="i" style="left:21.1px;top:114.7px;width:23.6px;height:23.6px;color:#6b7280;" viewBox="0 0 24 24" stroke-width="2"><path d="M21 7.5V6a2 2 0 0 0-2-2H5a2 2 0 0 0-2 2v14a2 2 0 0 0 2 2h3.5"/><path d="M16 2v4"/><path d="M8 2v4"/><path d="M3 10h5"/><path d="M17.5 17.5 16 16.3V14"/><circle cx="16" cy="16" r="6"/></svg>
<span class="t" style="left:51.9px;top:115.89px;font-size:20.74px;color:#6b7280;letter-spacing:-0.065px;-webkit-text-stroke:0.18px #6b7280;">15 Mar</span>
</article>
<article class="b" style="left:971.8px;top:530.7px;width:435.8px;height:175.2px;background:#fff;border-radius:17px;border:1px solid #e6e8ef;box-shadow:0 1px 3px rgba(16,24,40,.07);overflow:hidden;">
<div class="b" style="left:-1px;top:-1px;width:435.8px;height:10.5px;background:#fef3c7;"></div>
<div class="b" style="left:21.2px;top:25.4px;width:85px;height:28.2px;background:#0f766e;border-radius:15px;"></div>
<span class="t" style="left:34.55px;top:33.36px;font-size:15.7px;color:#fff;letter-spacing:0.369px;-webkit-text-stroke:0.35px #fff;">Packing</span>
<div class="b" style="left:111.8px;top:25.4px;width:76.5px;height:28.2px;background:#b91c1c;border-radius:15px;"></div>
<span class="t" style="left:125.15px;top:33.36px;font-size:15.7px;color:#fff;letter-spacing:0.215px;-webkit-text-stroke:0.35px #fff;">Urgent</span>
<span class="t" style="left:21.2px;top:72.67px;font-size:24.19px;color:#0a0a0a;letter-spacing:0.853px;-webkit-text-stroke:0.4px #0a0a0a;">Pack kitchen boxes</span>
<svg class="i" style="left:21.1px;top:117.3px;width:23.6px;height:23.6px;color:#6b7280;" viewBox="0 0 24 24" stroke-width="2"><path d="M21 7.5V6a2 2 0 0 0-2-2H5a2 2 0 0 0-2 2v14a2 2 0 0 0 2 2h3.5"/><path d="M16 2v4"/><path d="M8 2v4"/><path d="M3 10h5"/><path d="M17.5 17.5 16 16.3V14"/><circle cx="16" cy="16" r="6"/></svg>
<span class="t" style="left:52.9px;top:118.49px;font-size:20.74px;color:#6b7280;letter-spacing:0.775px;-webkit-text-stroke:0.18px #6b7280;">05 Mar</span>
</article>
<article class="b" style="left:971.8px;top:721.2px;width:435.8px;height:173px;background:#fff;border-radius:17px;border:1px solid #e6e8ef;box-shadow:0 1px 3px rgba(16,24,40,.07);overflow:hidden;">
<div class="b" style="left:21.2px;top:21px;width:81px;height:29.5px;background:#c2410c;border-radius:15px;"></div>
<span class="t" style="left:34.4px;top:28.96px;font-size:15.7px;color:#fff;letter-spacing:0.361px;-webkit-text-stroke:0.35px #fff;">Utilities</span>
<span class="t" style="left:21.2px;top:70.07px;font-size:24.19px;color:#0a0a0a;letter-spacing:0.825px;-webkit-text-stroke:0.4px #0a0a0a;">Cancel broadband at old address</span>
<svg class="i" style="left:21.1px;top:114.7px;width:23.6px;height:23.6px;color:#6b7280;" viewBox="0 0 24 24" stroke-width="2"><path d="M21 7.5V6a2 2 0 0 0-2-2H5a2 2 0 0 0-2 2v14a2 2 0 0 0 2 2h3.5"/><path d="M16 2v4"/><path d="M8 2v4"/><path d="M3 10h5"/><path d="M17.5 17.5 16 16.3V14"/><circle cx="16" cy="16" r="6"/></svg>
<span class="t" style="left:52.9px;top:115.89px;font-size:20.74px;color:#6b7280;letter-spacing:0.775px;-webkit-text-stroke:0.18px #6b7280;">07 Mar</span>
</article>
<article class="b" style="left:971.8px;top:908.7px;width:435.8px;height:171px;background:#fff;border-radius:17px;border:1px solid #e6e8ef;box-shadow:0 1px 3px rgba(16,24,40,.07);overflow:hidden;">
<div class="b" style="left:21.2px;top:21px;width:73.5px;height:29.5px;background:#4338ca;border-radius:15px;"></div>
<span class="t" style="left:35.45px;top:28.96px;font-size:15.7px;color:#fff;letter-spacing:0.315px;-webkit-text-stroke:0.35px #fff;">Admin</span>
<span class="t" style="left:21.2px;top:70.07px;font-size:24.19px;color:#0a0a0a;letter-spacing:0.759px;-webkit-text-stroke:0.4px #0a0a0a;">Book Royal Mail redirection</span>
<svg class="i" style="left:21.1px;top:114.7px;width:23.6px;height:23.6px;color:#6b7280;" viewBox="0 0 24 24" stroke-width="2"><path d="M21 7.5V6a2 2 0 0 0-2-2H5a2 2 0 0 0-2 2v14a2 2 0 0 0 2 2h3.5"/><path d="M16 2v4"/><path d="M8 2v4"/><path d="M3 10h5"/><path d="M17.5 17.5 16 16.3V14"/><circle cx="16" cy="16" r="6"/></svg>
<span class="t" style="left:52.9px;top:115.89px;font-size:20.74px;color:#6b7280;letter-spacing:0.775px;-webkit-text-stroke:0.18px #6b7280;">08 Mar</span>
</article>
<article class="b" style="left:1479.2px;top:530.4px;width:435.8px;height:173.6px;background:#fff;border-radius:17px;border:1px solid #e6e8ef;box-shadow:0 1px 3px rgba(16,24,40,.07);overflow:hidden;">
<div class="b" style="left:21.2px;top:21px;width:81px;height:29.5px;background:#c2410c;border-radius:15px;"></div>
<span class="t" style="left:34.4px;top:28.96px;font-size:15.7px;color:#fff;letter-spacing:0.361px;-webkit-text-stroke:0.35px #fff;">Utilities</span>
<span class="t" style="left:22.2px;top:70.07px;font-size:24.19px;color:#0a0a0a;letter-spacing:0.871px;-webkit-text-stroke:0.4px #0a0a0a;">Arrange final meter readings</span>
<svg class="i" style="left:21.1px;top:114.7px;width:23.6px;height:23.6px;color:#6b7280;" viewBox="0 0 24 24" stroke-width="2"><path d="M21 7.5V6a2 2 0 0 0-2-2H5a2 2 0 0 0-2 2v14a2 2 0 0 0 2 2h3.5"/><path d="M16 2v4"/><path d="M8 2v4"/><path d="M3 10h5"/><path d="M17.5 17.5 16 16.3V14"/><circle cx="16" cy="16" r="6"/></svg>
<span class="t" style="left:52.9px;top:115.89px;font-size:20.74px;color:#6b7280;letter-spacing:0.775px;-webkit-text-stroke:0.18px #6b7280;">04 Mar</span>
</article>
<article class="b" style="left:1479.2px;top:717.9px;width:435.8px;height:206.3px;background:#fff;border-radius:17px;border:1px solid #e6e8ef;box-shadow:0 1px 3px rgba(16,24,40,.07);overflow:hidden;">
<div class="b" style="left:21.2px;top:21px;width:76.5px;height:29.5px;background:#b91c1c;border-radius:15px;"></div>
<span class="t" style="left:34.55px;top:28.96px;font-size:15.7px;color:#fff;letter-spacing:0.215px;-webkit-text-stroke:0.35px #fff;">Urgent</span>
<span class="t" style="left:21.2px;top:70.07px;font-size:24.19px;color:#0a0a0a;letter-spacing:1.017px;-webkit-text-stroke:0.4px #0a0a0a;">Confirm moving van arrival</span>
<span class="t" style="left:23.2px;top:104.63px;font-size:24.19px;color:#0a0a0a;letter-spacing:1.101px;-webkit-text-stroke:0.4px #0a0a0a;">window</span>
<svg class="i" style="left:21.1px;top:149.26px;width:23.6px;height:23.6px;color:#6b7280;" viewBox="0 0 24 24" stroke-width="2"><path d="M21 7.5V6a2 2 0 0 0-2-2H5a2 2 0 0 0-2 2v14a2 2 0 0 0 2 2h3.5"/><path d="M16 2v4"/><path d="M8 2v4"/><path d="M3 10h5"/><path d="M17.5 17.5 16 16.3V14"/><circle cx="16" cy="16" r="6"/></svg>
<span class="t" style="left:52.9px;top:150.45px;font-size:20.74px;color:#6b7280;letter-spacing:0.775px;-webkit-text-stroke:0.18px #6b7280;">06 Mar</span>
</article>
<article class="b" style="left:1986px;top:530.4px;width:435.8px;height:173.6px;background:#fff;border-radius:17px;border:1px solid #e6e8ef;box-shadow:0 1px 3px rgba(16,24,40,.07);overflow:hidden;">
<div class="b" style="left:21.2px;top:21px;width:73.5px;height:29.5px;background:#4338ca;border-radius:15px;"></div>
<span class="t" style="left:35.45px;top:28.96px;font-size:15.7px;color:#fff;letter-spacing:0.315px;-webkit-text-stroke:0.35px #fff;">Admin</span>
<span class="t" style="left:22.2px;top:70.07px;font-size:24.19px;color:#0a0a0a;letter-spacing:0.839px;-webkit-text-stroke:0.4px #0a0a0a;">Transfer council tax</span>
<svg class="i" style="left:20.7px;top:114.8px;width:23.8px;height:23.8px;color:#059669;" viewBox="0 0 24 24" stroke-width="2"><circle cx="12" cy="12" r="10"/><path d="m9 12 2 2 4-4"/></svg>
<span class="t" style="left:52.6px;top:115.89px;font-size:20.74px;color:#059669;letter-spacing:0.888px;-webkit-text-stroke:0.18px #059669;">Done</span>
</article>
<article class="b" style="left:1986px;top:717.9px;width:435.8px;height:171.7px;background:#fff;border-radius:17px;border:1px solid #e6e8ef;box-shadow:0 1px 3px rgba(16,24,40,.07);overflow:hidden;">
<div class="b" style="left:21.2px;top:21px;width:85px;height:29.5px;background:#0f766e;border-radius:15px;"></div>
<span class="t" style="left:34.55px;top:28.96px;font-size:15.7px;color:#fff;letter-spacing:0.369px;-webkit-text-stroke:0.35px #fff;">Packing</span>
<span class="t" style="left:21.2px;top:70.07px;font-size:24.19px;color:#0a0a0a;letter-spacing:1.125px;-webkit-text-stroke:0.4px #0a0a0a;">Label storage boxes</span>
<svg class="i" style="left:21.1px;top:114.7px;width:23.6px;height:23.6px;color:#6b7280;" viewBox="0 0 24 24" stroke-width="2"><path d="M21 7.5V6a2 2 0 0 0-2-2H5a2 2 0 0 0-2 2v14a2 2 0 0 0 2 2h3.5"/><path d="M16 2v4"/><path d="M8 2v4"/><path d="M3 10h5"/><path d="M17.5 17.5 16 16.3V14"/><circle cx="16" cy="16" r="6"/></svg>
<span class="t" style="left:52.9px;top:115.89px;font-size:20.74px;color:#6b7280;letter-spacing:0.775px;-webkit-text-stroke:0.18px #6b7280;">02 Mar</span>
</article>
</main></div></body></html>
